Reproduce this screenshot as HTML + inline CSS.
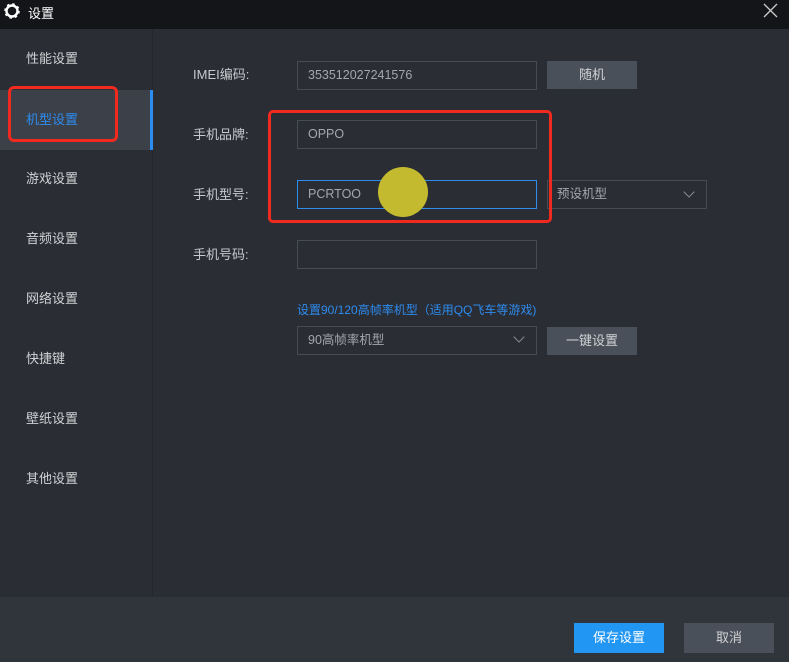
<!DOCTYPE html><html><head><meta charset="utf-8"><style>
*{margin:0;padding:0;box-sizing:border-box}
body{width:789px;height:662px;background:#2a2d34;font-family:"Liberation Sans","Noto Sans CJK SC",sans-serif;font-size:13px;color:#c8cacd;position:relative;overflow:hidden}
.a{position:absolute}
.title{left:0;top:0;width:789px;height:29px;background:#141518}
.side{left:0;top:29px;width:153px;height:568px;background:#2a2d33;border-right:1px solid #24262b}
.item{position:absolute;left:0;width:150px;height:60px;line-height:60px;padding-left:26px;color:#d0d2d5}
.in{position:absolute;left:297px;width:240px;height:29px;border:1px solid #474b53;background:#2a2d34;padding-left:10px;line-height:27px;color:#a4a7ab;font-size:12.5px}
.lbl{position:absolute;left:193px;color:#c8cacd}
.btn{position:absolute;background:#4a5059;color:#d0d2d5;text-align:center;font-size:13px}
.foot{left:0;top:597px;width:789px;height:65px;background:#30343b}
.chev{position:absolute;width:8px;height:8px;border-right:1px solid #8a8d92;border-bottom:1px solid #8a8d92;transform:rotate(45deg)}
</style></head><body>
<div class="a title"></div>
<svg class="a" style="left:4px;top:3px" width="16" height="16" viewBox="0 0 16 16"><circle cx="8" cy="8" r="5.5" fill="none" stroke="#fff" stroke-width="2.4"/><circle cx="8" cy="8" r="7" fill="none" stroke="#fff" stroke-width="1.6" stroke-dasharray="2.5 3"/></svg>
<div class="a" style="left:28px;top:3px;color:#fff;font-size:13px">设置</div>
<svg class="a" style="left:763px;top:3px" width="15" height="15"><path d="M1 1L14 14M14 1L1 14" stroke="#ccc" stroke-width="1.3"/></svg>
<div class="a side">
<div class="item" style="top:0">性能设置</div>
<div class="item" style="top:61px;background:#3c4048;color:#2d8cf0">机型设置</div>
<div class="a" style="left:150px;top:61px;width:3px;height:60px;background:#2d8cf0"></div>
<div class="item" style="top:120px">游戏设置</div>
<div class="item" style="top:180px">音频设置</div>
<div class="item" style="top:240px">网络设置</div>
<div class="item" style="top:300px">快捷键</div>
<div class="item" style="top:360px">壁纸设置</div>
<div class="item" style="top:420px">其他设置</div>
</div>
<div class="a" style="left:8px;top:86px;width:110px;height:56px;border:3px solid #f02a1e;border-radius:6px"></div>

<div class="lbl" style="top:64px">IMEI编码:</div>
<div class="in" style="top:61px">353512027241576</div>
<div class="btn" style="left:547px;top:61px;width:90px;height:28px;line-height:28px">随机</div>

<div class="lbl" style="top:124px">手机品牌:</div>
<div class="in" style="top:120px">OPPO</div>
<div class="lbl" style="top:184px">手机型号:</div>
<div class="in" style="top:180px;border-color:#2d8cf0">PCRTOO</div>
<div class="in" style="top:180px;left:547px;width:160px;padding-left:9px">预设机型</div>
<div class="chev" style="left:685px;top:188px"></div>
<div class="a" style="left:378px;top:167px;width:50px;height:50px;border-radius:50%;background:#c4ba30"></div>
<div class="a" style="left:268px;top:110px;width:284px;height:113px;border:3px solid #f02a1e;border-radius:5px"></div>

<div class="lbl" style="top:244px">手机号码:</div>
<div class="in" style="top:240px"></div>

<div class="a" style="left:297px;top:301px;color:#2d8cf0;font-size:12px">设置90/120高帧率机型（适用QQ飞车等游戏)</div>
<div class="in" style="top:326px">90高帧率机型</div>
<div class="chev" style="left:515px;top:333px"></div>
<div class="btn" style="left:547px;top:327px;width:90px;height:28px;line-height:28px">一键设置</div>

<div class="a foot"></div>
<div class="btn" style="left:574px;top:623px;width:90px;height:30px;line-height:30px;background:#2196f3;color:#fff">保存设置</div>
<div class="btn" style="left:684px;top:623px;width:90px;height:30px;line-height:30px">取消</div>
</body></html>
